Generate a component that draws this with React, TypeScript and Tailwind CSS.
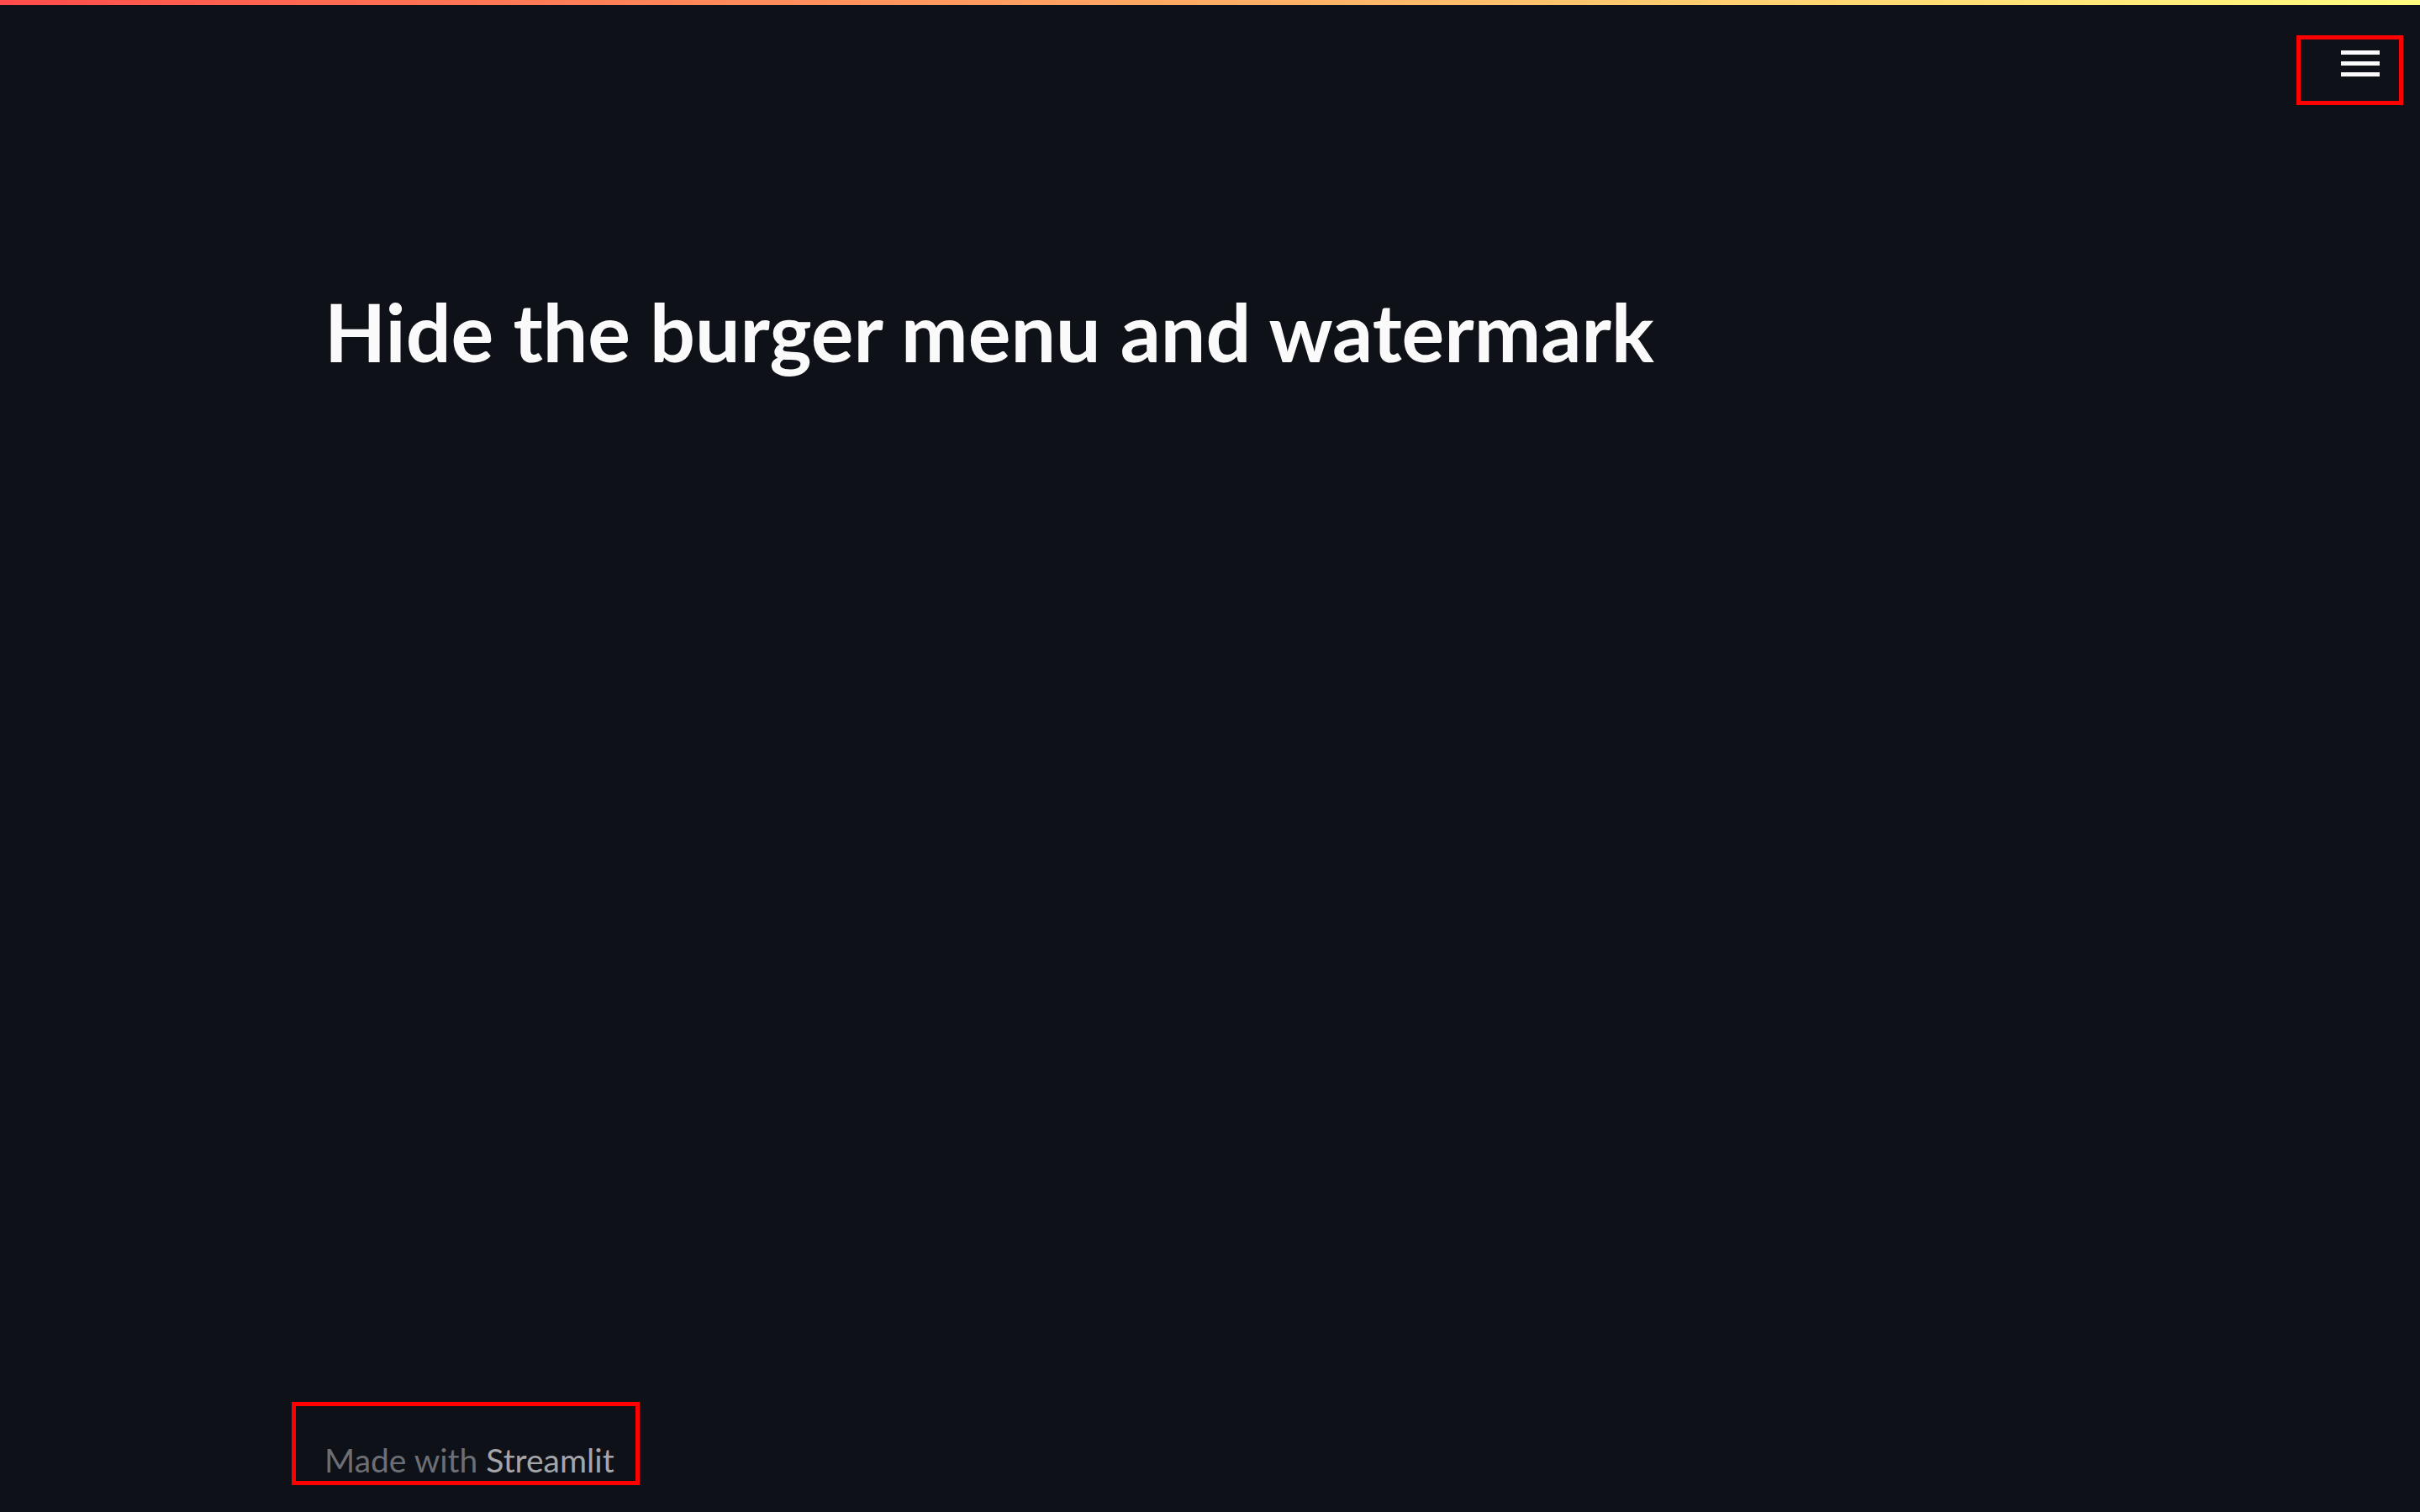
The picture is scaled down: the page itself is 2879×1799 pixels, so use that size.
export default function App() {
  return (
    <div className="w-[2879px] h-[1799px] bg-[#0e1117] flex flex-col overflow-hidden">
      {/* 상단 그라데이션 */}
      <div className="h-[6px] w-full bg-gradient-to-r from-[#ff4b4b] to-[#fffd80]" />

      {/* 헤더 */}
      <header className="flex justify-end pt-[36px] pr-[20px]">
        <div className="w-[127px] h-[83px] border-[5px] border-[#ff0000] pl-[48px] pt-[13px]">
          <div className="w-[46px] flex flex-col gap-[8px]">
            <div className="h-[5px] bg-[#fafafa]" />
            <div className="h-[5px] bg-[#fafafa]" />
            <div className="h-[5px] bg-[#fafafa]" />
          </div>
        </div>
      </header>

      {/* 제목 */}
      <main className="grow pl-[386px] pt-[222px]">
        <h1 className="font-['Lato',sans-serif] font-bold text-[95px] leading-none text-[#fafafa]">
          Hide the burger menu and watermark
        </h1>
      </main>

      {/* 푸터 */}
      <footer className="pl-[347px] pb-[32px]">
        <div className="w-[414px] h-[99px] border-[5px] border-[#ff0000] pl-[34px] pt-[45px]">
          <span className="font-['Lato',sans-serif] text-[39px] leading-none text-[#6c6e75]">
            Made with <span className="text-[#a3a5ab]">Streamlit</span>
          </span>
        </div>
      </footer>
    </div>
  );
}
